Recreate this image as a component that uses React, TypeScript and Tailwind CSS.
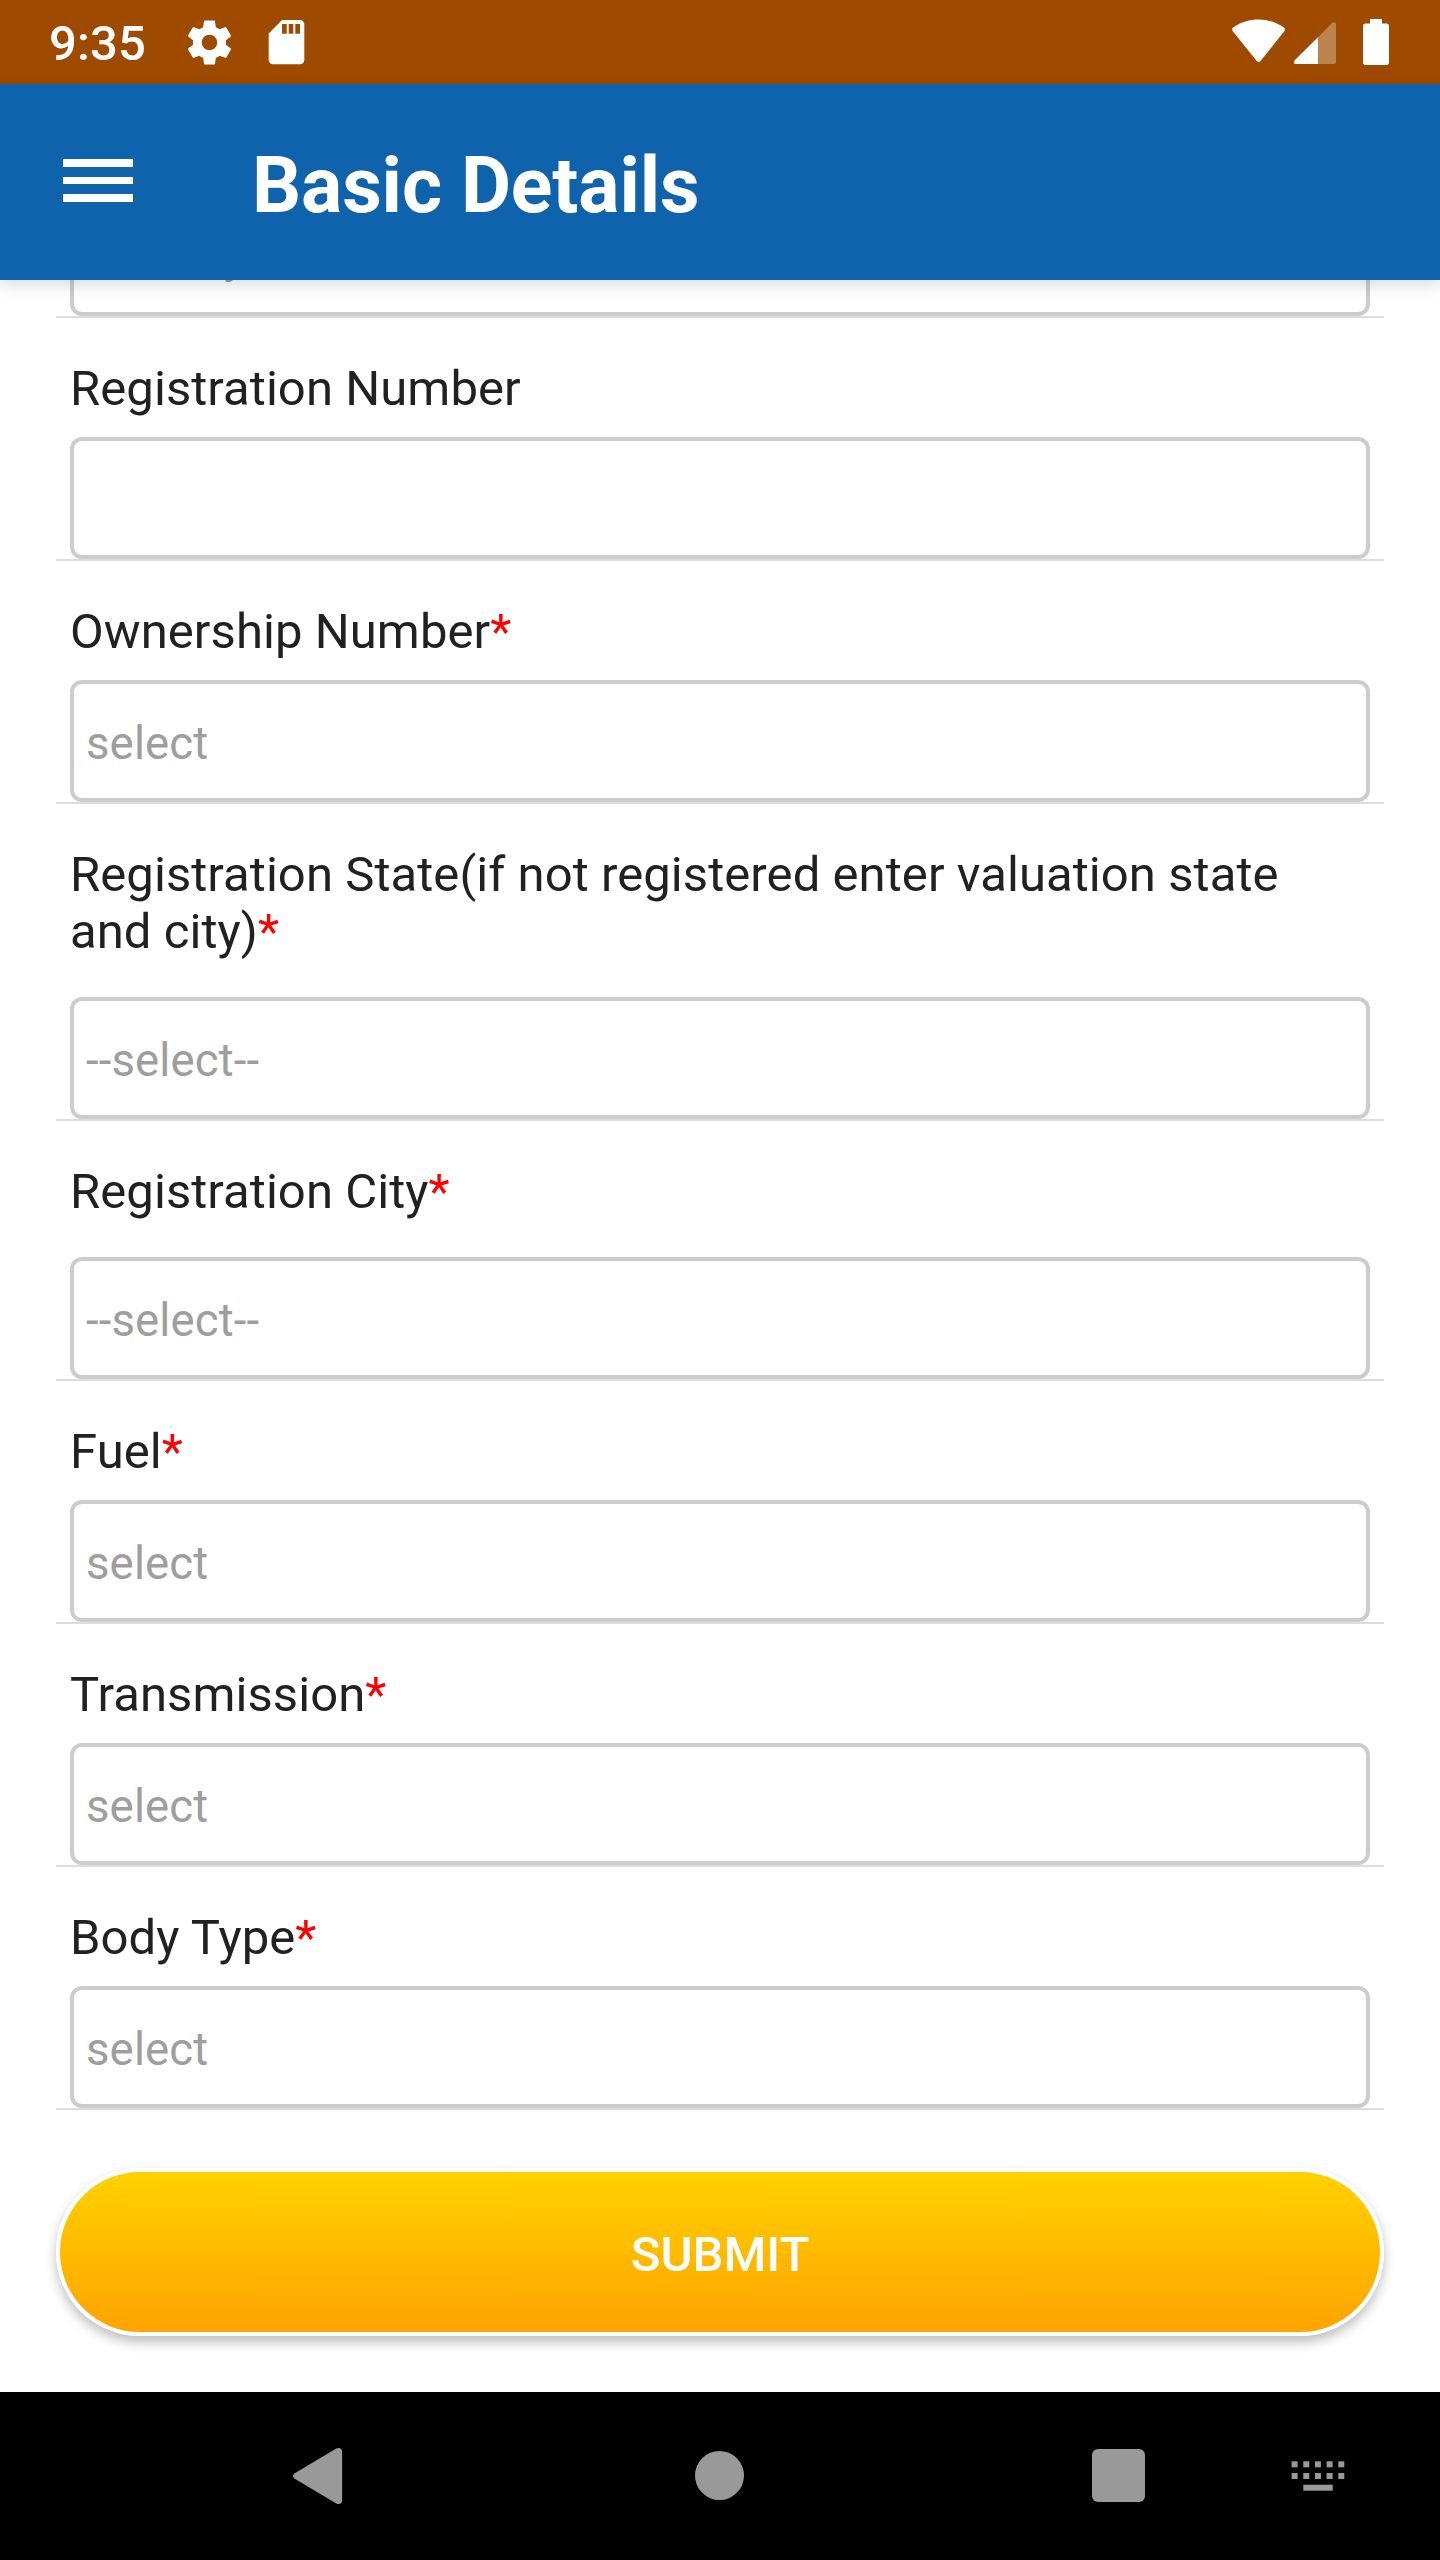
type FieldProps = {
  label?: string;
  required?: boolean;
  value?: string;
  roomy?: boolean;
};

const fields: FieldProps[] = [
  { label: "Registration Number" },
  { label: "Ownership Number", required: true, value: "select" },
  {
    label: "Registration State(if not registered enter valuation state and city)",
    required: true,
    value: "--select--",
    roomy: true,
  },
  { label: "Registration City", required: true, value: "--select--", roomy: true },
  { label: "Fuel", required: true, value: "select" },
  { label: "Transmission", required: true, value: "select" },
  { label: "Body Type", required: true, value: "select" },
];

function Field({ label, required, value, roomy }: FieldProps) {
  return (
    <div className="border-b-2 border-[#dddddd] px-3.5">
      {label && (
        <div className={roomy ? "pt-[42px] pb-[37px]" : "pt-[42px] pb-5"}>
          <label className="block pr-7 text-[49px] leading-[57px] tracking-[0.07px] text-[#212121]">
            {label}
            {required && <span className="text-[#ff0000]">*</span>}
          </label>
        </div>
      )}
      <div className="flex h-[122px] items-center rounded-[12px] border-4 border-[#cccccc] px-3 pt-1 text-[45.5px] leading-[53px] tracking-[0.14px] text-[#9e9e9e]">
        {label ? value : <span className="tracking-[-0.5px]">{value}</span>}
      </div>
    </div>
  );
}

function StatusBar() {
  return (
    <div className="flex h-[84px] items-center bg-[#9e4a00] pl-[49px] text-white">
      <span className="w-[134px] pt-[2px] text-[49px] leading-[57px] font-medium tracking-[0.1px]">9:35</span>
      <svg className="h-[53px] w-[53px]" viewBox="0 0 24 24" fill="currentColor">
        <path d="M19.43 12.98c.04-.32.07-.64.07-.98s-.03-.66-.07-.98l2.11-1.65c.19-.15.24-.42.12-.64l-2-3.46c-.12-.22-.39-.3-.61-.22l-2.49 1c-.52-.4-1.08-.73-1.69-.98l-.38-2.65A.488.488 0 0 0 14 2h-4c-.25 0-.46.18-.49.42l-.38 2.65c-.61.25-1.17.59-1.69.98l-2.49-1c-.23-.09-.49 0-.61.22l-2 3.46c-.13.22-.07.49.12.64l2.11 1.65c-.04.32-.07.65-.07.98s.03.66.07.98l-2.11 1.65c-.19.15-.24.42-.12.64l2 3.46c.12.22.39.3.61.22l2.49-1c.52.4 1.08.73 1.69.98l.38 2.65c.03.24.24.42.49.42h4c.25 0 .46-.18.49-.42l.38-2.65c.61-.25 1.17-.59 1.69-.98l2.49 1c.23.09.49 0 .61-.22l2-3.46c.12-.22.07-.49-.12-.64l-2.11-1.65zM12 15.5c-1.93 0-3.5-1.57-3.5-3.5s1.57-3.5 3.5-3.5 3.5 1.57 3.5 3.5-1.57 3.5-3.5 3.5z" />
      </svg>
      <svg className="ml-[32px] h-[46px] w-[37px]" viewBox="268 19 37 46" fill="currentColor">
        <path
          fillRule="evenodd"
          d="M282 20h18a4.3 4.3 0 0 1 4.3 4.3v35.7a4.3 4.3 0 0 1-4.3 4.3h-27a4.3 4.3 0 0 1-4.3-4.3V33.4zM282 24v9.8h4.7V24zM288.7 24v9.8h4.6V24zM295.3 24v9.8h4.7V24z"
        />
      </svg>
      <svg className="ml-auto h-[48px] w-[160px]" viewBox="1230 18 160 48" fill="currentColor">
        <path d="M1233 31.6C1231.7 30 1231.8 28.4 1233.4 27.2C1249 16.9 1268 16.9 1283.7 27.2C1285.3 28.4 1285.4 30 1284.1 31.6L1260.5 61C1259.3 62.4 1257.9 62.4 1256.7 61Z" />
        <path
          d="M1318 37.2L1332 23C1333.6 21.5 1336 22 1336 24.2V62.2Q1336 64 1334.2 64H1318Z"
          opacity=".31"
        />
        <path d="M1318 37.2V64H1296C1293.8 64 1293.2 61.7 1294.7 60.2Z" />
        <path d="M1370 19h12v4.4h4.2Q1389 23.4 1389 26.2V62.2Q1389 65 1386.2 65H1365.8Q1363 65 1363 62.2V26.2Q1363 23.4 1365.8 23.4H1370Z" />
      </svg>
      <div className="w-[50px]" />
    </div>
  );
}

function AppBar() {
  return (
    <header className="relative z-10 flex h-[196px] items-center bg-[#0f62ac] pl-[63px] text-white shadow-[0_4px_16px_rgba(0,0,0,0.16)]">
      <button aria-label="Open menu" className="-mt-[3px] flex flex-col gap-[10.3px]">
        <span className="h-[7.3px] w-[70px] bg-white" />
        <span className="h-[7.3px] w-[70px] bg-white" />
        <span className="h-[7.3px] w-[70px] bg-white" />
      </button>
      <h1 className="ml-[119px] mt-[8px] text-[77px] leading-[90px] font-bold tracking-[-0.1px]">
        Basic Details
      </h1>
    </header>
  );
}

function NavBar() {
  const dots = [0, 1, 2, 3, 4];
  return (
    <nav className="flex h-[168px] items-center bg-black text-[#999999]">
      <svg className="ml-[292px] h-[58px] w-[52px]" viewBox="292 2447 52 58" fill="currentColor">
        <path d="M294.3 2473.6L336.3 2448.6C339.3 2446.9 342.1 2448.6 342.1 2451.5V2500.5C342.1 2503.4 339.3 2505.1 336.3 2503.4L294.3 2478.4C292.6 2477 292.6 2475 294.3 2473.6Z" />
      </svg>
      <div className="-mt-px ml-[351px] h-[49px] w-[49px] rounded-full bg-[#999999]" />
      <div className="-mt-px ml-[347.5px] h-[53px] w-[53px] rounded-[6px] bg-[#999999]" />
      <svg className="ml-[146.5px] h-[32px] w-[56px]" viewBox="1291 2460 56 32" fill="currentColor">
        {dots.map((i) => (
          <g key={i}>
            <rect x={1291.6 + i * 11.67} y="2461.3" width="6" height="6" />
            <rect x={1291.6 + i * 11.67} y="2473" width="6" height="6" />
          </g>
        ))}
        <rect x="1303.3" y="2484.7" width="29.4" height="6" />
      </svg>
    </nav>
  );
}

export default function App() {
  return (
    <div
      className="flex h-[2560px] w-[1440px] flex-col overflow-hidden bg-white"
      style={{ fontFamily: "Roboto, sans-serif" }}
    >
      <StatusBar />
      <AppBar />
      <main className="flex-1 overflow-hidden px-14">
        <div className="-mt-[86px]">
          <Field value="January" />
          {fields.map((f) => (
            <Field key={f.label} {...f} />
          ))}
        </div>
        <button className="mt-[58px] flex h-[168px] w-full items-center justify-center rounded-full border-4 border-white bg-linear-to-b from-[#ffd200] to-[#ffa200] bg-origin-border pt-[4px] text-[49px] leading-[57px] font-medium text-white shadow-[0_6px_12px_rgba(0,0,0,0.26)]">
          SUBMIT
        </button>
      </main>
      <NavBar />
    </div>
  );
}
